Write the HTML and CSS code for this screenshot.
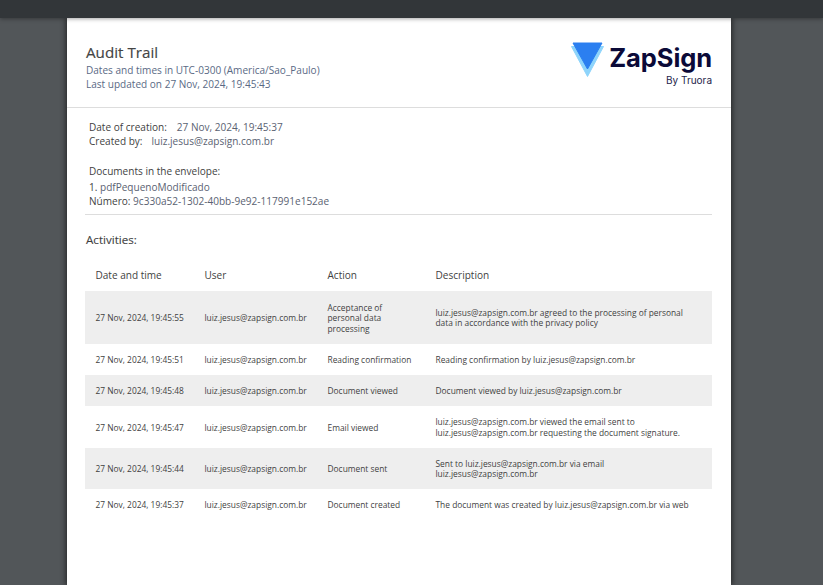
FILE: index.html
```html
<!DOCTYPE html>
<html lang="en">
<head>
<meta charset="utf-8">
<title>Audit Trail</title>
<link rel="stylesheet" href="styles.css">
</head>
<body>
<div class="toolbar"></div>
<main class="viewer">
  <article class="page">
    <header class="head">
      <div class="head-text">
        <h1 class="title">Audit Trail</h1>
        <p class="sub">Dates and times in UTC-0300 (America/Sao_Paulo)</p>
        <p class="sub">Last updated on 27 Nov, 2024, 19:45:43</p>
      </div>
      <div class="logo">
        <div class="logo-main">
          <svg class="logo-mark" width="33" height="35" viewBox="0 0 33 35">
            <path d="M0.5 4.5H32.5L16.5 34.5Z" fill="#8ed4fb" stroke="#8ed4fb" stroke-linejoin="round"/>
            <path d="M2 1H31L16.5 27Z" fill="#2b7ff0" stroke="#2b7ff0" stroke-linejoin="round"/>
          </svg>
          <span class="logo-name">ZapSign</span>
        </div>
        <span class="logo-by">By Truora</span>
      </div>
    </header>
    <section class="meta">
      <p class="line"><span class="label gap-a">Date of creation:</span><span class="value">27 Nov, 2024, 19:45:37</span></p>
      <p class="line"><span class="label gap-b">Created by:</span><span class="value">luiz.jesus@zapsign.com.br</span></p>
      <p class="line docs-title"><span class="label">Documents in the envelope:</span></p>
      <p class="line docs-first"><span class="label">1.</span> <span class="value">pdfPequenoModificado</span></p>
      <p class="line"><span class="label">Número:</span> <span class="value">9c330a52-1302-40bb-9e92-117991e152ae</span></p>
    </section>
    <section class="activities">
      <h2 class="act-title">Activities:</h2>
      <table class="grid">
        <colgroup>
          <col class="c1"><col class="c2"><col class="c3"><col class="c4">
        </colgroup>
        <thead>
          <tr class="hrow"><th>Date and time</th><th>User</th><th>Action</th><th>Description</th></tr>
        </thead>
        <tbody>
          <tr class="shade r53"><td>27 Nov, 2024, 19:45:55</td><td>luiz.jesus@zapsign.com.br</td><td>Acceptance of<br>personal data<br>processing</td><td>luiz.jesus@zapsign.com.br agreed to the processing of personal<br>data in accordance with the privacy policy</td></tr>
          <tr class="r31"><td>27 Nov, 2024, 19:45:51</td><td>luiz.jesus@zapsign.com.br</td><td>Reading confirmation</td><td>Reading confirmation by luiz.jesus@zapsign.com.br</td></tr>
          <tr class="shade r31"><td>27 Nov, 2024, 19:45:48</td><td>luiz.jesus@zapsign.com.br</td><td>Document viewed</td><td>Document viewed by luiz.jesus@zapsign.com.br</td></tr>
          <tr class="r42"><td>27 Nov, 2024, 19:45:47</td><td>luiz.jesus@zapsign.com.br</td><td>Email viewed</td><td>luiz.jesus@zapsign.com.br viewed the email sent to<br>luiz.jesus@zapsign.com.br requesting the document signature.</td></tr>
          <tr class="shade r41"><td>27 Nov, 2024, 19:45:44</td><td>luiz.jesus@zapsign.com.br</td><td>Document sent</td><td>Sent to luiz.jesus@zapsign.com.br via email<br>luiz.jesus@zapsign.com.br</td></tr>
          <tr class="r31"><td>27 Nov, 2024, 19:45:37</td><td>luiz.jesus@zapsign.com.br</td><td>Document created</td><td>The document was created by luiz.jesus@zapsign.com.br via web</td></tr>
        </tbody>
      </table>
    </section>
  </article>
</main>
</body>
</html>
```
FILE: styles.css
```css
* { box-sizing: border-box; }
html, body { margin: 0; height: 100%; overflow: hidden; }
body {
  background: #525659;
  font-family: "Open Sans", "Liberation Sans", sans-serif;
  color: #3f3f3f;
  display: flex;
  flex-direction: column;
}
.toolbar {
  height: 18px;
  flex: none;
  background: #323639;
  box-shadow: 0 1px 4px rgba(0,0,0,.35);
  position: relative;
  z-index: 1;
}
.viewer { flex: 1; padding-left: 67px; min-height: 0; }
.page {
  width: 664px;
  height: 100%;
  background: #fff;
  box-shadow: -2px 0 5px rgba(0,0,0,.4), 2px 0 5px rgba(0,0,0,.4);
}
.head {
  height: 90px;
  border-bottom: 1px solid #ddd;
  display: flex;
  justify-content: space-between;
  padding: 24px 19px 0 19px;
}
.title { margin: 0; font-size: 15.2px; line-height: 21px; font-weight: 400; color: #444; -webkit-text-stroke: 0.15px #444; }
.sub { margin: 0; font-size: 10.05px; line-height: 14px; color: #5a6a85; }
.logo { display: flex; flex-direction: column; align-items: flex-end; }
.logo-main { display: flex; align-items: flex-start; gap: 5.5px; }
.logo-mark { display: block; }
.logo-name { font-family: "Inter", "Liberation Sans", sans-serif; font-weight: 700; font-size: 25.5px; line-height: 31px; color: #0b0a38; letter-spacing: -0.1px; }
.logo-by { font-family: "Inter", "Liberation Sans", sans-serif; font-size: 10px; line-height: 12px; color: #1e1e4a; margin-top: -3px; }
.meta {
  margin: 0 19px 0 18px;
  padding: 12px 0 7px 4px;
  border-bottom: 1px solid #ddd;
  height: 107px;
}
.line { margin: 0; font-size: 10.05px; line-height: 14px; }
.label { color: #3f3f3f; }
.value { color: #5a6272; }
.gap-a { margin-right: 10px; }
.gap-b { margin-right: 9px; }
.docs-title { margin-top: 16px; margin-bottom: 2px; }
.activities { padding: 0 19px 0 18px; }
.act-title { margin: 16px 0 13px 1px; font-size: 11.6px; line-height: 17px; font-weight: 400; color: #3f3f3f; -webkit-text-stroke: 0.1px #3f3f3f; }
.grid { border-collapse: collapse; width: 627px; table-layout: fixed; }
.c1 { width: 109px; } .c2 { width: 123px; } .c3 { width: 108px; } .c4 { width: 287px; }
.grid th, .grid td { padding: 0 0 0 10.5px; text-align: left; vertical-align: middle; }
.grid th { font-size: 10.05px; font-weight: 400; color: #3f3f3f; height: 30px; padding-bottom: 2px; }
.grid td { font-size: 8.4px; line-height: 10.5px; color: #3f3f3f; padding-top: 1.5px; }
.shade { background: #eee; }
.r53 { height: 53px; } .r31 { height: 31px; } .r42 { height: 42px; } .r41 { height: 41px; }
```
